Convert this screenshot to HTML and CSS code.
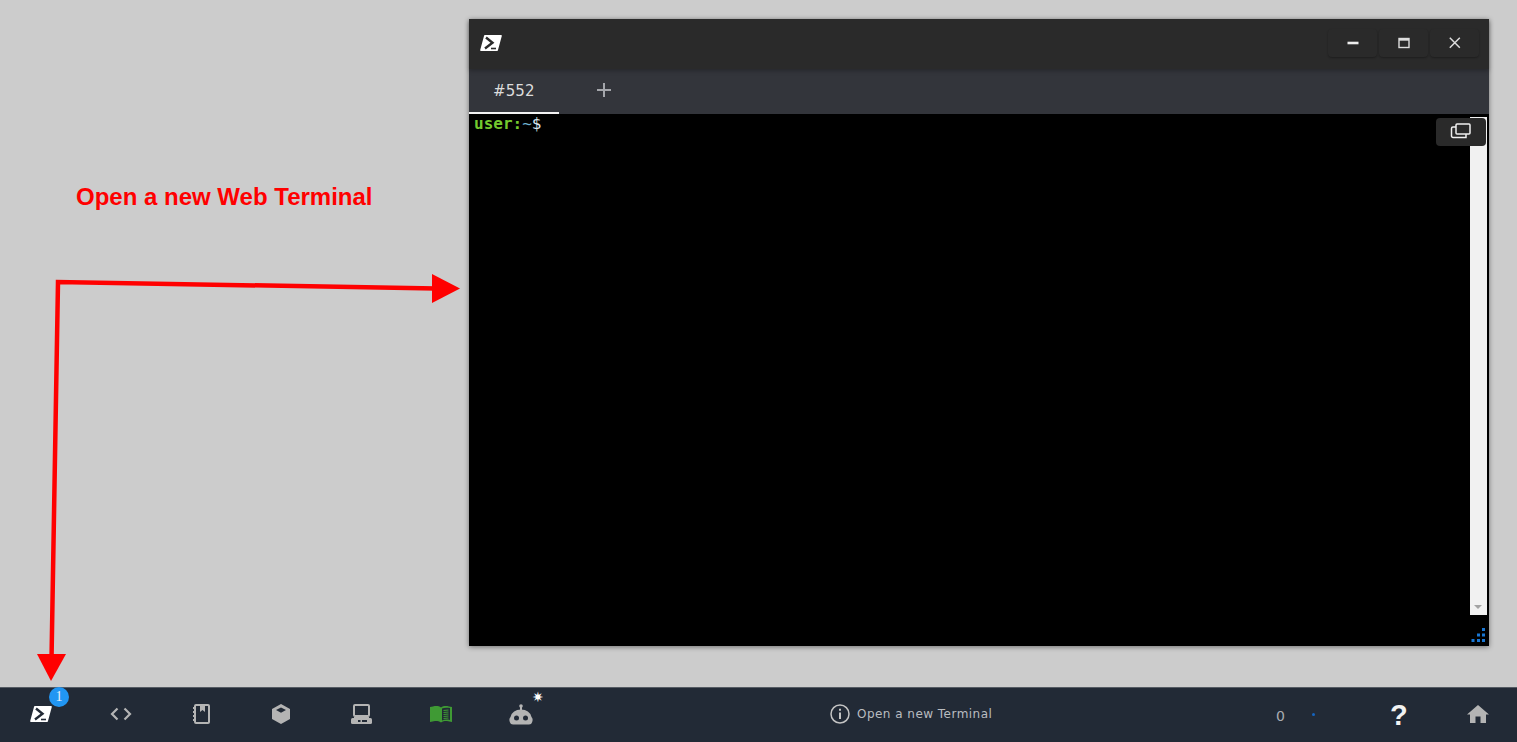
FILE: index.html
```html
<!DOCTYPE html>
<html lang="en">
<head>
<meta charset="utf-8">
<title>Web Terminal</title>
<link rel="stylesheet" href="styles.css">
</head>
<body>
<main class="desktop">
  <div class="annotation">Open a new Web Terminal</div>
  <svg class="arrows" width="1517" height="687" viewBox="0 0 1517 687">
    <path d="M51.5 660 L58 282 L436 288.500" fill="none" stroke="#ff0000" stroke-width="4.500"/>
    <polygon points="432,274 460,288.500 432,303" fill="#ff0000"/>
    <polygon points="37,654 66,654 51,681" fill="#ff0000"/>
  </svg>
  <section class="window">
    <header class="titlebar">
      <svg class="ps-icon" width="22" height="18" viewBox="0 0 22 18">
        <path d="M5 1 H21 a.8 .8 0 0 1 .8 1 L18 16 a1 1 0 0 1 -1 1 H1 a.8 .8 0 0 1 -.8 -1 L4 2 a1 1 0 0 1 1 -1Z" fill="#fff"/>
        <path d="M6 3.500 L12.500 8.800 L5 14.500" fill="none" stroke="#2a2a2a" stroke-width="2.400"/>
        <path d="M11 14.500 H16" stroke="#2a2a2a" stroke-width="1.600"/>
      </svg>
      <div class="win-controls">
        <button class="win-btn"><svg width="14" height="14" viewBox="0 0 14 14"><path d="M1.500 7 H12.500" stroke="#eee" stroke-width="2.600"/></svg></button>
        <button class="win-btn"><svg width="14" height="14" viewBox="0 0 14 14"><rect x="2" y="2.500" width="10" height="9" fill="none" stroke="#ddd" stroke-width="1.400"/><path d="M2 3.500 H12" stroke="#ddd" stroke-width="2.400"/></svg></button>
        <button class="win-btn"><svg width="14" height="14" viewBox="0 0 14 14"><path d="M1.800 1.800 L11.800 11.800 M11.800 1.800 L1.800 11.800" stroke="#ddd" stroke-width="1.500"/></svg></button>
      </div>
    </header>
    <nav class="tabbar">
      <div class="tab">#552</div>
      <svg class="tab-add" width="16" height="16" viewBox="0 0 16 16"><path d="M8 1 V15 M1 8 H15" stroke="#a4a6ab" stroke-width="2"/></svg>
    </nav>
    <div class="terminal">
      <div class="prompt"><span class="p-user">user:</span><span class="p-path">~</span><span class="p-sign">$</span></div>
      <div class="scrollbar"><span class="scroll-arrow"></span></div>
      <button class="term-btn">
        <svg width="22" height="18" viewBox="0 0 22 18" fill="none" stroke="#f0f0f0" stroke-width="1.500">
          <rect x="6" y="2" width="14" height="10" rx="1"/>
          <path d="M6 5 H3 a1.500 1.500 0 0 0 -1.500 1.500 V14 a1.500 1.500 0 0 0 1.500 1.500 H16 V12"/>
        </svg>
      </button>
      <svg class="resize" width="16" height="16" viewBox="0 0 16 16" fill="#1976d2">
        <rect x="12" y="0" width="3" height="3"/>
        <rect x="7" y="5.500" width="3" height="3"/><rect x="12" y="5.500" width="3" height="3"/>
        <rect x="1.500" y="11" width="3" height="3"/><rect x="7" y="11" width="3" height="3"/><rect x="12" y="11" width="3" height="3"/>
      </svg>
    </div>
  </section>
</main>
<footer class="taskbar">
  <div class="tools">
    <div class="tool">
      <svg class="nudge" width="22" height="18" viewBox="0 0 22 18">
        <path d="M5 1 H21 a.8 .8 0 0 1 .8 1 L18 16 a1 1 0 0 1 -1 1 H1 a.8 .8 0 0 1 -.8 -1 L4 2 a1 1 0 0 1 1 -1Z" fill="#fff"/>
        <path d="M6 3.500 L12.500 8.800 L5 14.500" fill="none" stroke="#222a36" stroke-width="2.400"/>
        <path d="M11 14.500 H16" stroke="#222a36" stroke-width="1.600"/>
      </svg>
      <span class="badge">1</span>
    </div>
    <div class="tool">
      <svg class="nudge" width="22" height="14" viewBox="0 0 22 14" fill="none" stroke="#b4b4b4" stroke-width="2.200"><path d="M7.500 1.500 L2 7 L7.500 12.500 M14.500 1.500 L20 7 L14.500 12.500"/></svg>
    </div>
    <div class="tool">
      <svg class="nudge" width="18" height="20" viewBox="0 0 18 20">
        <rect x="3" y="1" width="14" height="18" rx="1" fill="none" stroke="#b4b4b4" stroke-width="2"/>
        <path d="M8 1 H13 V8 L10.500 6 L8 8Z" fill="#b4b4b4"/>
        <path d="M1 4 H4 M1 8 H4 M1 12 H4 M1 16 H4" stroke="#b4b4b4" stroke-width="2"/>
      </svg>
    </div>
    <div class="tool">
      <svg class="nudge" width="20" height="22" viewBox="0 0 20 22">
        <path d="M10 1 L19 6 V16 L10 21 L1 16 V6Z" fill="#b4b4b4"/>
        <path d="M10 4.500 L15 7 L10 9.800 L5 7Z" fill="#222a36"/>
      </svg>
    </div>
    <div class="tool">
      <svg class="nudge" width="21" height="20" viewBox="0 0 21 20">
        <rect x="3" y="1" width="15" height="11" rx="1" fill="none" stroke="#b4b4b4" stroke-width="2"/>
        <rect x="0" y="14" width="21" height="6" rx="1.500" fill="#b4b4b4"/>
        <path d="M3 13.500 H18" stroke="#b4b4b4" stroke-width="1"/>
        <rect x="7" y="16" width="2.500" height="2" fill="#222a36"/><rect x="11" y="16" width="5" height="2" fill="#222a36"/>
      </svg>
    </div>
    <div class="tool">
      <svg class="nudge" width="24" height="20" viewBox="0 0 24 20">
        <path d="M1 3 L4 2.500 C7 1.800 10 2 12 3.500 C14 2 17 1.800 20 2.500 L23 3 V18 L18 17 C16 16.800 14 17.200 12 18.500 C10 17.200 8 16.800 6 17 L1 18Z" fill="#3f9a34"/>
        <path d="M13 4.500 C15 3.500 18 3.500 21 4 V16 C18 15.300 15 15.500 13 16.500Z" fill="#222a36"/>
        <path d="M14.500 6.500 L19.500 6 M14.500 8.500 L19.500 8 M14.500 10.500 L19.500 10 M14.500 12.500 L19.500 12 M14.500 14.500 L19.500 14" stroke="#3f9a34" stroke-width="1.200"/>
      </svg>
    </div>
    <div class="tool">
      <svg class="nudge" width="24" height="21" viewBox="0 0 24 21">
        <circle cx="12" cy="2" r="1.800" fill="#b4b4b4"/>
        <path d="M11 2 H13 V7 H11Z" fill="#b4b4b4"/>
        <path d="M4 20.500 H20 Q22.500 20.500 23 18.500 Q24.500 15 22.500 13 Q20.500 5.500 12 5.500 Q3.500 5.500 1.500 13 Q-.5 15 1 18.500 Q1.500 20.500 4 20.500Z" fill="#b4b4b4"/>
        <circle cx="7.500" cy="14" r="2.500" fill="#222a36"/><circle cx="16.500" cy="14" r="2.500" fill="#222a36"/>
      </svg>
      <span class="spark">✷</span>
    </div>
  </div>
  <div class="status">
    <svg width="20" height="20" viewBox="0 0 20 20" fill="none" stroke="#c4c4c4">
      <circle cx="10" cy="10" r="9" stroke-width="1.500"/>
      <path d="M10 8.500 V15" stroke-width="2"/><path d="M10 4.800 V6.800" stroke-width="2"/>
    </svg>
    <span class="status-text">Open a new Terminal</span>
  </div>
  <div class="right">
    <span class="count">0</span>
    <span class="dot"></span>
    <span class="help">?</span>
    <svg class="home" width="22" height="18" viewBox="0 0 22 18" fill="#b4b4b4">
      <path d="M11 0 L22 9.500 H19 V18 H13.500 V11.500 H8.500 V18 H3 V9.500 H0Z"/>
    </svg>
  </div>
</footer>
</body>
</html>
```
FILE: styles.css
```css
* { box-sizing: border-box; }
html, body { height: 100%; }
body {
  margin: 0;
  display: flex;
  flex-direction: column;
  height: 742px;
  overflow: hidden;
  background: #cccccc;
  font-family: "DejaVu Sans", sans-serif;
}
.desktop { position: relative; flex: 1; min-height: 0; }
.annotation {
  position: absolute;
  left: 76px;
  top: 182px;
  font: bold 24px/30px "Liberation Sans", Arial, sans-serif;
  color: #ff0000;
}
.arrows { position: absolute; left: 0; top: 0; }
.window {
  position: absolute;
  left: 469px;
  top: 19px;
  width: 1020px;
  height: 627px;
  display: flex;
  flex-direction: column;
  box-shadow: 0 1px 5px rgba(0,0,0,.45);
  background: #000;
}
.titlebar {
  height: 50px;
  background: #2a2a2a;
  display: flex;
  align-items: center;
  justify-content: space-between;
  padding: 0 10px 2px 11px;
  box-shadow: 0 2px 4px rgba(0,0,0,.25);
  position: relative;
}
.ps-icon { display: block; }
.win-controls { display: flex; gap: 2px; }
.win-btn {
  width: 49px;
  height: 28px;
  padding: 0;
  border: 0;
  border-radius: 4px;
  background: #2a2a2a;
  box-shadow: 0 1px 2px rgba(0,0,0,.3);
  display: flex;
  align-items: center;
  justify-content: center;
}
.tabbar {
  height: 45px;
  background: #33353b;
  display: flex;
  align-items: center;
}
.tab {
  width: 90px;
  height: 45px;
  border-bottom: 2px solid #f2f2f2;
  color: #dcdcdc;
  font-size: 15px;
  line-height: 45px;
  padding-left: 24px;
  letter-spacing: .1px;
}
.tab-add { margin-left: 37px; margin-bottom: 3px; }
.terminal { position: relative; flex: 1; background: #000; padding: 0 5px; }
.prompt { font: 16px/19px "DejaVu Sans Mono", monospace; }
.p-user { color: #74c92e; font-weight: bold; }
.p-path { color: #6fb3d2; }
.p-sign { color: #d8e4ee; }
.scrollbar {
  position: absolute;
  right: 2px;
  top: 3px;
  width: 17px;
  height: 498px;
  background: #f1f1f1;
}
.scroll-arrow {
  position: absolute;
  left: 4px;
  bottom: 6px;
  border: 4.500px solid transparent;
  border-top: 4.500px solid #a3a3a3;
  border-bottom: 0;
}
.term-btn {
  position: absolute;
  right: 3px;
  top: 4px;
  width: 50px;
  height: 28px;
  padding: 0 0 3px;
  border: 0;
  border-radius: 4px;
  background: #2a2a2a;
  display: flex;
  align-items: center;
  justify-content: center;
}
.resize { position: absolute; right: 3px; bottom: 2px; }
.taskbar {
  height: 55px;
  flex: none;
  background: #222a36;
  border-top: 1px solid #555b63;
  display: flex;
  align-items: center;
  position: relative;
}
.tools { display: flex; padding-bottom: 2px; }
.tool {
  width: 80px;
  display: flex;
  align-items: center;
  justify-content: center;
  position: relative;
  height: 30px;
}
.nudge { transform: translateX(1px); }
.badge {
  position: absolute;
  left: 49px;
  top: -12px;
  width: 20px;
  height: 20px;
  border-radius: 50%;
  background: #2196f3;
  color: #e6f2fd;
  font: 14px/20px "Liberation Serif", serif;
  text-align: center;
}
.spark {
  position: absolute;
  left: 52px;
  top: -9px;
  font: 14px/14px "DejaVu Sans", sans-serif;
  color: #fff;
}
.status {
  position: absolute;
  left: 830px;
  top: 16px;
  display: flex;
  align-items: center;
  gap: 7px;
}
.status-text {
  font: 12px/20px "DejaVu Sans", sans-serif;
  letter-spacing: .47px;
  color: #b9bcc0;
}
.right {
  margin-left: auto;
  display: flex;
  align-items: center;
  height: 30px;
  padding-right: 28px;
  padding-bottom: 2px;
}
.count { font-size: 14px; color: #a9adb2; width: 10px; margin-top: 3px; }
.dot {
  width: 3px;
  height: 3px;
  border-radius: 50%;
  background: #1565c0;
  margin-left: 26px;
}
.help {
  font: bold 29px/30px "Liberation Sans", sans-serif;
  color: #f2f2f2;
  margin-left: 75px;
  width: 16px;
  text-align: center;
  margin-top: 1px;
}
.home { margin-left: 61px; }
```
